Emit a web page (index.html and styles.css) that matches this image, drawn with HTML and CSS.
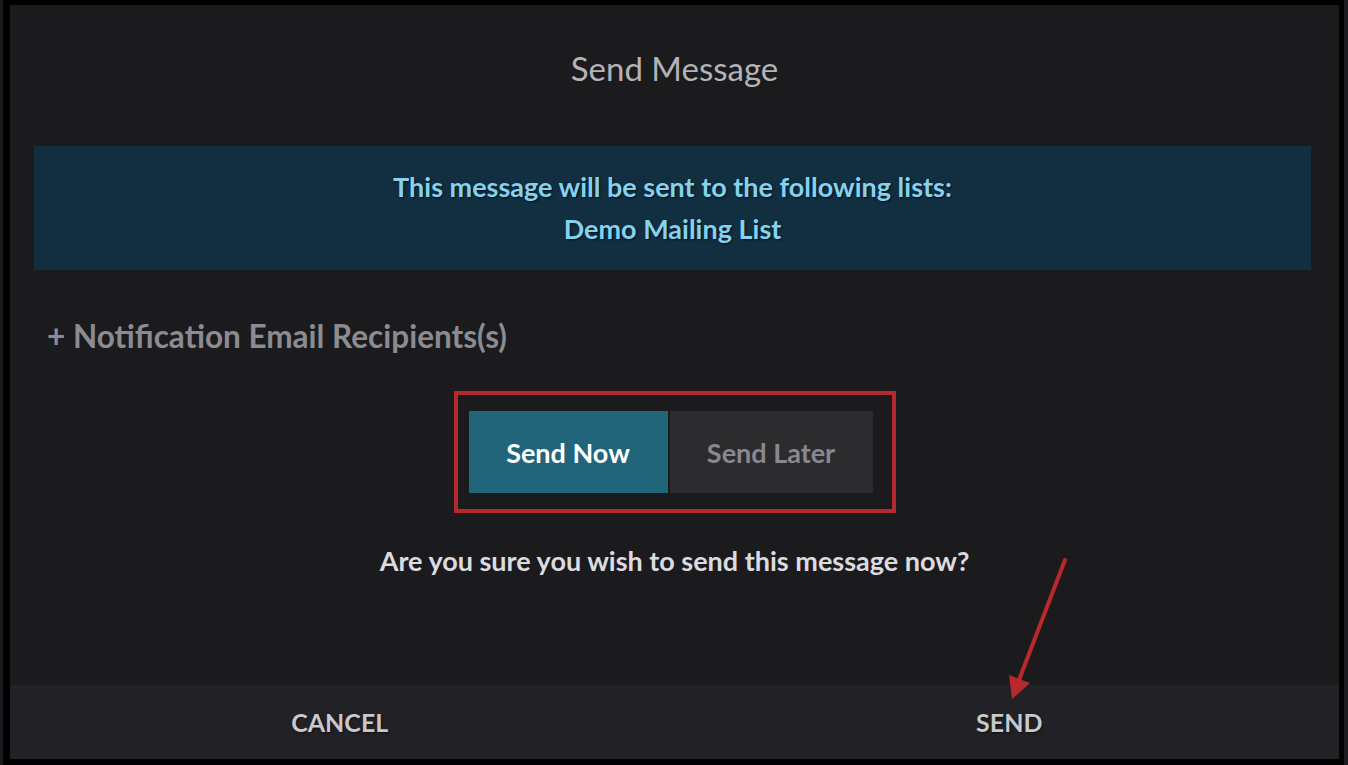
FILE: index.html
```
<!DOCTYPE html>
<html lang="en">
<head>
<meta charset="utf-8">
<title>Send Message</title>
<link rel="stylesheet" href="styles.css">
</head>
<body>
<div class="screen">
  <div class="dialog">
    <div class="dialog-body">
      <h1 class="title">Send Message</h1>
      <div class="info">
        <div>This message will be sent to the following lists:</div>
        <div>Demo Mailing List</div>
      </div>
      <div class="recipients"><span class="plus">+</span> Notification Email Recipients(s)</div>
      <div class="toggle-wrap">
        <div class="toggle">
          <button class="seg seg-active">Send Now</button>
          <button class="seg">Send Later</button>
        </div>
      </div>
      <p class="question">Are you sure you wish to send this message now?</p>
    </div>
    <div class="footer">
      <button class="foot-btn">CANCEL</button>
      <button class="foot-btn">SEND</button>
    </div>
  </div>
</div>
<svg class="annot" width="1348" height="765" viewBox="0 0 1348 765" aria-hidden="true">
  <line x1="1065" y1="560" x2="1019" y2="680" stroke="#b8292e" stroke-width="4" stroke-linecap="round"/>
  <polygon points="1012,699 1009,675 1030,683" fill="#b8292e"/>
</svg>
</body>
</html>
```
FILE: styles.css
```
* { box-sizing: border-box; }
html, body { margin: 0; padding: 0; }
body {
  background: #000;
  width: 1348px;
  height: 765px;
  overflow: hidden;
  position: relative;
  font-family: Lato, "Open Sans", sans-serif;
}
.screen {
  height: 765px;
  padding: 5px 5px 6px 7px;
  border-left: 3px solid #1c1c1e;
  border-right: 4px solid #1c1c1e;
  background: #000;
}
.dialog {
  height: 100%;
  background: #1b1b1d;
  display: flex;
  flex-direction: column;
}
.dialog-body {
  flex: 1;
  display: flex;
  flex-direction: column;
}
.title {
  margin: 0;
  padding-top: 43px;
  height: 141px;
  line-height: 40px;
  text-align: center;
  font-size: 33px;
  font-weight: 400;
  color: #b4b4b8;
}
.info {
  margin: 0 28px 0 24px;
  height: 124px;
  padding: 20px 0;
  background: #112f40;
  color: #85d2f0;
  text-align: center;
  font-size: 27px;
  font-weight: 700;
  line-height: 42px;
  text-shadow: 1px 1px 2px rgba(0, 0, 0, 0.7);
}
.recipients {
  margin: 46px 0 0 37px;
  line-height: 40px;
  font-size: 31.5px;
  font-weight: 700;
  color: #8b8b91;
}
.toggle-wrap {
  align-self: center;
  margin-top: 35px;
  border: 4px solid #b3292d;
  padding: 16px 19px 16px 11px;
}
.toggle {
  display: flex;
  gap: 2px;
}
.seg {
  border: 0;
  margin: 0;
  height: 82px;
  font-family: inherit;
  font-size: 27px;
  font-weight: 700;
  background: #2c2c2f;
  color: #88888e;
  width: 203px;
  padding: 0;
}
.seg-active {
  width: 199px;
  background: #20657a;
  color: #ffffff;
}
.question {
  margin: 31px 0 0;
  line-height: 34px;
  text-align: center;
  font-size: 27px;
  font-weight: 700;
  color: #dcdce0;
}
.footer {
  height: 74px;
  display: flex;
  background: #222226;
}
.foot-btn {
  flex: 1;
  border: 0;
  background: transparent;
  font-family: inherit;
  font-size: 25px;
  font-weight: 700;
  color: #c8c8cd;
  text-shadow: 1px 1px 2px rgba(0, 0, 0, 0.6);
  padding: 0;
}
.foot-btn:first-child { padding-right: 10px; }
.annot {
  position: absolute;
  top: 0;
  left: 0;
  pointer-events: none;
}
```
